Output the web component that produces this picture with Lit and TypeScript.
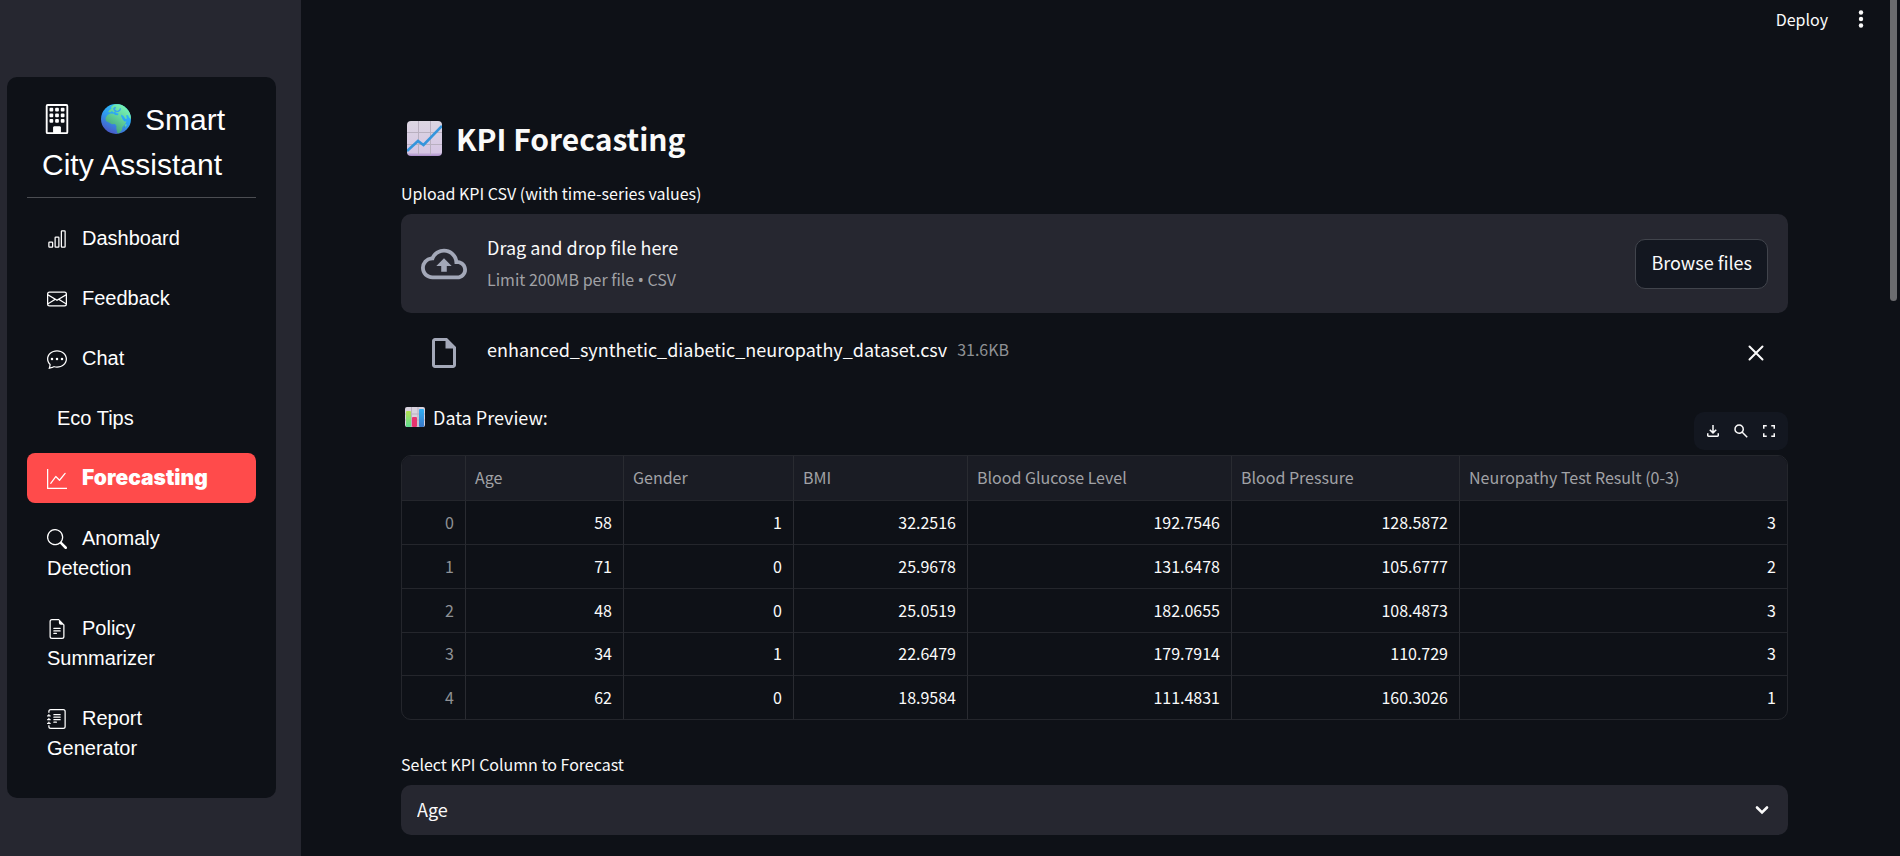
import { LitElement, html, css, svg, nothing } from "lit";
import { customElement, property, state } from "lit/decorators.js";
import { classMap } from "lit/directives/class-map.js";

const navIcons: Record<string, string[]> = {
  building: [
    "M4 2.5a.5.5 0 0 1 .5-.5h1a.5.5 0 0 1 .5.5v1a.5.5 0 0 1-.5.5h-1a.5.5 0 0 1-.5-.5zm3 0a.5.5 0 0 1 .5-.5h1a.5.5 0 0 1 .5.5v1a.5.5 0 0 1-.5.5h-1a.5.5 0 0 1-.5-.5zm3 0a.5.5 0 0 1 .5-.5h1a.5.5 0 0 1 .5.5v1a.5.5 0 0 1-.5.5h-1a.5.5 0 0 1-.5-.5zm-6 3a.5.5 0 0 1 .5-.5h1a.5.5 0 0 1 .5.5v1a.5.5 0 0 1-.5.5h-1a.5.5 0 0 1-.5-.5zm3 0a.5.5 0 0 1 .5-.5h1a.5.5 0 0 1 .5.5v1a.5.5 0 0 1-.5.5h-1a.5.5 0 0 1-.5-.5zm3 0a.5.5 0 0 1 .5-.5h1a.5.5 0 0 1 .5.5v1a.5.5 0 0 1-.5.5h-1a.5.5 0 0 1-.5-.5zm-6 3a.5.5 0 0 1 .5-.5h1a.5.5 0 0 1 .5.5v1a.5.5 0 0 1-.5.5h-1a.5.5 0 0 1-.5-.5zm3 0a.5.5 0 0 1 .5-.5h1a.5.5 0 0 1 .5.5v1a.5.5 0 0 1-.5.5h-1a.5.5 0 0 1-.5-.5zm3 0a.5.5 0 0 1 .5-.5h1a.5.5 0 0 1 .5.5v1a.5.5 0 0 1-.5.5h-1a.5.5 0 0 1-.5-.5z",
    "M3 0a1 1 0 0 0-1 1v14a1 1 0 0 0 1 1h10a1 1 0 0 0 1-1V1a1 1 0 0 0-1-1zm0 1h10v14h-3v-2.500a.5.5 0 0 0-.5-.5h-3a.5.5 0 0 0-.5.5V15H3z",
    "M6 15v-2.500a.5.5 0 0 1 .5-.5h3a.5.5 0 0 1 .5.5V15z",
  ],
  bars: [
    "M4 11H2v3h2zm5-4H7v7h2zm5-5v12h-2V2zm-2-1a1 1 0 0 0-1 1v12a1 1 0 0 0 1 1h2a1 1 0 0 0 1-1V2a1 1 0 0 0-1-1zM6 7a1 1 0 0 1 1-1h2a1 1 0 0 1 1 1v7a1 1 0 0 1-1 1H7a1 1 0 0 1-1-1zm-5 4a1 1 0 0 1 1-1h2a1 1 0 0 1 1 1v3a1 1 0 0 1-1 1H2a1 1 0 0 1-1-1z",
  ],
  envelope: [
    "M0 4a2 2 0 0 1 2-2h12a2 2 0 0 1 2 2v8a2 2 0 0 1-2 2H2a2 2 0 0 1-2-2zm2-1a1 1 0 0 0-1 1v.217l7 4.2 7-4.2V4a1 1 0 0 0-1-1zm13 2.383-4.708 2.825L15 11.105zm-.034 6.876-5.64-3.471L8 9.583l-1.326-.795-5.64 3.47A1 1 0 0 0 2 13h12a1 1 0 0 0 .966-.741M1 11.105l4.708-2.897L1 5.383z",
  ],
  chat: [
    "M5 8a1 1 0 1 1-2 0 1 1 0 0 1 2 0m4 0a1 1 0 1 1-2 0 1 1 0 0 1 2 0m3 1a1 1 0 1 0 0-2 1 1 0 0 0 0 2",
    "m2.165 15.803.02-.004c1.83-.363 2.948-.842 3.468-1.105A9 9 0 0 0 8 15c4.418 0 8-3.134 8-7s-3.582-7-8-7-8 3.134-8 7c0 1.76.743 3.37 1.97 4.6a10.4 10.4 0 0 1-.524 2.318l-.003.011a11 11 0 0 1-.244.637c-.079.186.074.394.273.362a22 22 0 0 0 .693-.125m.8-3.108a1 1 0 0 0-.287-.801C1.618 10.83 1 9.468 1 8c0-3.192 3.004-6 7-6s7 2.808 7 6-3.004 6-7 6a8 8 0 0 1-2.088-.272 1 1 0 0 0-.711.074c-.387.196-1.24.57-2.634.893a11 11 0 0 0 .398-2",
  ],
  graph: [
    "M0 0h1v15h15v1H0zm14.817 3.113a.5.5 0 0 1 .07.704l-4.5 5.5a.5.5 0 0 1-.74.037L7.06 6.767l-3.656 5.027a.5.5 0 0 1-.808-.588l4-5.5a.5.5 0 0 1 .758-.06l2.609 2.61 4.15-5.073a.5.5 0 0 1 .704-.07",
  ],
  search: [
    "M11.742 10.344a6.5 6.5 0 1 0-1.397 1.398h-.001q.044.06.098.115l3.85 3.85a1 1 0 0 0 1.415-1.414l-3.85-3.85a1 1 0 0 0-.115-.1zM12 6.5a5.5 5.5 0 1 1-11 0 5.5 5.5 0 0 1 11 0",
  ],
  file: [
    "M5.5 7a.5.5 0 0 0 0 1h5a.5.5 0 0 0 0-1zM5 9.500a.5.5 0 0 1 .5-.5h5a.5.5 0 0 1 0 1h-5a.5.5 0 0 1-.5-.5m0 2a.5.5 0 0 1 .5-.5h2a.5.5 0 0 1 0 1h-2a.5.5 0 0 1-.5-.5",
    "M9.500 0H4a2 2 0 0 0-2 2v12a2 2 0 0 0 2 2h8a2 2 0 0 0 2-2V4.500zm0 1v2A1.500 1.500 0 0 0 11 4.500h2V14a1 1 0 0 1-1 1H4a1 1 0 0 1-1-1V2a1 1 0 0 1 1-1z",
  ],
  journal: [
    "M5 10.500a.5.5 0 0 1 .5-.5h2a.5.5 0 0 1 0 1h-2a.5.5 0 0 1-.5-.5m0-2a.5.5 0 0 1 .5-.5h5a.5.5 0 0 1 0 1h-5a.5.5 0 0 1-.5-.5m0-2a.5.5 0 0 1 .5-.5h5a.5.5 0 0 1 0 1h-5a.5.5 0 0 1-.5-.5m0-2a.5.5 0 0 1 .5-.5h5a.5.5 0 0 1 0 1h-5a.5.5 0 0 1-.5-.5",
    "M3 0h10a2 2 0 0 1 2 2v12a2 2 0 0 1-2 2H3a2 2 0 0 1-2-2v-1h1v1a1 1 0 0 0 1 1h10a1 1 0 0 0 1-1V2a1 1 0 0 0-1-1H3a1 1 0 0 0-1 1v1H1V2a2 2 0 0 1 2-2",
    "M1 5v-.5a.5.5 0 0 1 1 0V5h.5a.5.5 0 0 1 0 1h-2a.5.5 0 0 1 0-1zm0 3v-.5a.5.5 0 0 1 1 0V8h.5a.5.5 0 0 1 0 1h-2a.5.5 0 0 1 0-1zm0 3v-.5a.5.5 0 0 1 1 0v.5h.5a.5.5 0 0 1 0 1h-2a.5.5 0 0 1 0-1z",
  ],
};

const navIcon = (name: string) => html`<svg class="icon" viewBox="0 0 16 16" aria-hidden="true">
  ${navIcons[name].map((d) => svg`<path d=${d}></path>`)}
</svg>`;

interface NavItem {
  label: string;
  icon?: string;
}

const navItems: NavItem[] = [
  { label: "Dashboard", icon: "bars" },
  { label: "Feedback", icon: "envelope" },
  { label: "Chat", icon: "chat" },
  { label: "Eco Tips" },
  { label: "Forecasting", icon: "graph" },
  { label: "Anomaly Detection", icon: "search" },
  { label: "Policy Summarizer", icon: "file" },
  { label: "Report Generator", icon: "journal" },
];

@customElement("side-menu")
export class SideMenu extends LitElement {
  @state() private current = "Forecasting";

  static styles = css`
    :host {
      display: block;
      flex: 0 0 301px;
      box-sizing: border-box;
      padding: 77px 25px 20px 7px;
      background: #262730;
      font-family: "Liberation Sans", Arial, sans-serif;
      color: #fff;
    }
    .card {
      padding: 20px;
      border-radius: 10px;
      background: #0e1117;
    }
    .title {
      margin: 0;
      padding: 0 15px 10px;
      border-bottom: 1px solid #4b4d52;
      font-size: 30px;
      font-weight: 400;
      line-height: 45px;
    }
    .title .icon {
      width: 30px;
      height: 30px;
      margin-right: 29px;
      vertical-align: -4px;
    }
    .globe {
      width: 30px;
      height: 30px;
      margin-right: 14px;
      vertical-align: -4px;
    }
    .list {
      margin: 10px 0 0;
      padding: 0;
      list-style: none;
    }
    .item {
      padding: 5px 0;
    }
    .link {
      display: block;
      padding: 10px 20px;
      border-radius: 8px;
      color: inherit;
      font-size: 20px;
      line-height: 30px;
      text-decoration: none;
    }
    .link .icon {
      width: 20px;
      height: 20px;
      margin-right: 15px;
      vertical-align: -4px;
    }
    .plain {
      padding-left: 30px;
    }
    .current {
      background: #ff4b4b;
      font-family: Inter, "Liberation Sans", sans-serif;
      font-size: 21px;
      font-weight: 900;
    }
    .icon {
      fill: currentColor;
    }
  `;

  render() {
    return html`
      <nav class="card" aria-label="Main">
        <h2 class="title">${navIcon("building")}<svg class="globe" viewBox="0 0 30 30" aria-hidden="true">
            <defs>
              <linearGradient id="sea" x1="0.8" y1="0.1" x2="0.3" y2="1">
                <stop offset="0" stop-color="#2cc3ff"></stop>
                <stop offset="0.5" stop-color="#2f9bee"></stop>
                <stop offset="1" stop-color="#4a55c4"></stop>
              </linearGradient>
              <linearGradient id="land" x1="0.9" y1="0" x2="0.3" y2="1">
                <stop offset="0" stop-color="#7dffc0"></stop>
                <stop offset="0.5" stop-color="#62d39a"></stop>
                <stop offset="1" stop-color="#3f9a78"></stop>
              </linearGradient>
              <clipPath id="disc"><circle cx="15" cy="15" r="15"></circle></clipPath>
            </defs>
            <g clip-path="url(#disc)">
              <rect width="30" height="30" fill="url(#sea)"></rect>
              <path fill="url(#land)" d="M7 8l1.500-2 2-1.200L10 3l3-2.500L18 0h6l6 8v7l-2-1.500-1-2.500-2 .5 1 3-1.500.5-2-3-2-1.500-.5 1.500 2 4 1.500 1.500h2l-2 3.500-2 2-.5 3-2 2.500-1.500 1-1.200-.5-1-4.500.2-2.500-1.500-2-3 .3L5 17l-.5-3 2-3 3-1.500 3.500.3 1 1.200 3 .2.500-1.700-2.500-.5-1-1.500-1.500 1-1.500-1.500-2 1.500z"></path>
              <path fill="#38a5ee" d="M12 4.500l2-2 1 1-1 2 2 1.500 2-1 1-2 1 .5-.5 2-2 1.500-3 .2-1.500-1.500z"></path>
              <path fill="url(#land)" d="M23.500 22l1.500-2 .5 1-1 2.500-1 .5z"></path>
            </g>
          </svg>Smart City Assistant</h2>
        <ul class="list">
          ${navItems.map(
            (item) => html`<li class="item">
              <a
                class=${classMap({ link: true, plain: !item.icon, current: item.label === this.current })}
                href="#"
                aria-current=${item.label === this.current ? "page" : nothing}
                @click=${(e: Event) => {
                  e.preventDefault();
                  this.current = item.label;
                }}
                >${item.icon ? navIcon(item.icon) : nothing}${item.label}</a
              >
            </li>`
          )}
        </ul>
      </nav>
    `;
  }
}

const columns = ["Age", "Gender", "BMI", "Blood Glucose Level", "Blood Pressure", "Neuropathy Test Result (0-3)"];

const rows: string[][] = [
  ["58", "1", "32.2516", "192.7546", "128.5872", "3"],
  ["71", "0", "25.9678", "131.6478", "105.6777", "2"],
  ["48", "0", "25.0519", "182.0655", "108.4873", "3"],
  ["34", "1", "22.6479", "179.7914", "110.729", "3"],
  ["62", "0", "18.9584", "111.4831", "160.3026", "1"],
];

@customElement("data-grid")
export class DataGrid extends LitElement {
  @property({ attribute: false }) columns: string[] = [];
  @property({ attribute: false }) rows: string[][] = [];

  static styles = css`
    :host {
      display: block;
      overflow: hidden;
      border: 1px solid #24262c;
      border-radius: 10px;
    }
    .grid {
      width: 100%;
      table-layout: fixed;
      border-collapse: separate;
      border-spacing: 0;
      font-size: 16px;
      line-height: 24px;
    }
    .index { width: 64px; }
    .c0 { width: 158px; }
    .c1 { width: 170px; }
    .c2 { width: 174px; }
    .c3 { width: 264px; }
    .c4 { width: 228px; }
    th,
    td {
      box-sizing: border-box;
      height: 44px;
      padding: 0 11px 2px 9px;
      border-right: 1px solid #292b31;
      border-bottom: 1px solid #24262c;
      font-weight: 400;
      text-align: right;
      white-space: nowrap;
    }
    thead th {
      height: 45px;
      background: #1a1c24;
      color: #a1a2a6;
      text-align: left;
    }
    tbody th {
      color: #8f9195;
    }
    tr > :last-child {
      border-right: 0;
    }
    tbody tr:nth-child(n + 4) > * {
      height: 43px;
    }
    tbody tr:last-child > * {
      border-bottom: 0;
    }
  `;

  render() {
    return html`
      <table class="grid">
        <colgroup>
          <col class="index" />
          ${this.columns.map((_, i) => html`<col class=${`c${i}`} />`)}
        </colgroup>
        <thead>
          <tr>
            <th></th>
            ${this.columns.map((c) => html`<th scope="col">${c}</th>`)}
          </tr>
        </thead>
        <tbody>
          ${this.rows.map(
            (r, i) => html`<tr>
              <th scope="row">${i}</th>
              ${r.map((v) => html`<td>${v}</td>`)}
            </tr>`
          )}
        </tbody>
      </table>
    `;
  }
}

const symbol = (d: string) =>
  html`<svg class="symbol" viewBox="0 -960 960 960" aria-hidden="true"><path d=${d}></path></svg>`;

@customElement("app-root")
export class AppRoot extends LitElement {
  static styles = css`
    :host {
      display: flex;
      height: 100vh;
      overflow: hidden;
      background: #0e1117;
      color: #fafafa;
      font-family: "Noto Sans CJK SC", "Noto Sans", sans-serif;
      font-size: 18px;
      line-height: 30px;
    }
    button {
      padding: 0;
      border: 0;
      background: none;
      color: inherit;
      font: inherit;
      cursor: pointer;
    }
    svg {
      display: block;
      fill: currentColor;
    }
    .main {
      flex: 1;
      min-width: 0;
    }
    .topbar {
      display: flex;
      justify-content: flex-end;
      align-items: center;
      gap: 23px;
      height: 38px;
      padding-right: 17px;
    }
    .deploy {
      font-size: 16px;
    }
    .content {
      padding: 79px 100px 20px;
    }
    .heading {
      display: flex;
      align-items: center;
      gap: 14px;
      margin: 0 0 20px;
      padding-left: 6px;
      font-size: 30px;
      font-weight: 700;
      line-height: 42px;
    }
    .label {
      display: block;
      margin-bottom: 7px;
      font-size: 16px;
      line-height: 28px;
    }
    .dropzone {
      display: flex;
      align-items: center;
      gap: 20px;
      padding: 20px;
      border-radius: 10px;
      background: #262730;
    }
    .lead {
      display: flex;
      flex: 0 0 46px;
      justify-content: center;
      color: #a3a8b8;
    }
    .hint {
      flex: 1;
      display: grid;
      gap: 5px;
      line-height: 27px;
    }
    .muted {
      color: #a0a1a5;
      font-size: 16px;
    }
    .dot {
      font-family: "Noto Sans", sans-serif;
      line-height: 1;
    }
    .browse {
      height: 50px;
      padding: 0 15px 4px;
      border: 1px solid #41444c;
      border-radius: 10px;
      background: #131720;
    }
    .picker {
      display: none;
    }
    .file {
      display: flex;
      align-items: center;
      gap: 20px;
      height: 40px;
      margin-top: 20px;
      padding: 0 20px;
    }
    .name {
      display: flex;
      flex: 1;
      gap: 10px;
      padding-bottom: 8px;
    }
    .size {
      color: #8f9195;
      font-size: 16px;
    }
    .remove {
      padding: 2px;
    }
    .preview {
      display: flex;
      justify-content: space-between;
      height: 47px;
      margin: 30px 0 5px;
    }
    .caption {
      display: flex;
      align-items: center;
      gap: 8px;
      height: 28px;
      margin: 0;
      padding-left: 4px;
    }
    .tools {
      display: flex;
      align-self: flex-end;
      height: 38px;
      padding: 0 5px;
      border-radius: 10px;
      background: #131720;
    }
    .tool {
      display: grid;
      place-items: center;
      width: 28px;
    }
    .symbol {
      width: 18px;
      height: 18px;
    }
    .choose {
      margin-top: 30px;
    }
    .combo {
      display: grid;
      align-items: center;
    }
    .select {
      grid-area: 1 / 1;
      width: 100%;
      height: 50px;
      padding: 0 16px 2px;
      border: 0;
      border-radius: 10px;
      appearance: none;
      background: #262730;
      color: inherit;
      font: inherit;
    }
    .chevron {
      grid-area: 1 / 1;
      justify-self: end;
      margin-right: 18px;
      fill: none;
      pointer-events: none;
    }
    .scroll {
      flex: 0 0 12px;
      display: flex;
      justify-content: center;
      padding-right: 1px;
      box-sizing: border-box;
    }
    .thumb {
      width: 7px;
      height: 301px;
      border-radius: 0 0 4px 4px;
      background: #6b6c6f;
    }
  `;

  render() {
    return html`
      <side-menu></side-menu>
      <main class="main">
        <header class="topbar">
          <button class="deploy">Deploy</button>
          <button aria-label="Menu">
            <svg width="20" height="20" viewBox="0 0 20 20">
              <circle cx="10" cy="3.500" r="2.200"></circle>
              <circle cx="10" cy="10" r="2.200"></circle>
              <circle cx="10" cy="16.500" r="2.200"></circle>
            </svg>
          </button>
        </header>
        <div class="content">
          <h1 class="heading">
            <svg width="35" height="35" viewBox="0 0 35 35" aria-hidden="true">
              <defs>
                <linearGradient id="paper" x1="0" y1="0" x2="0" y2="1">
                  <stop offset="0" stop-color="#dcd6e2"></stop>
                  <stop offset="0.900" stop-color="#d6c6e4"></stop>
                  <stop offset="1" stop-color="#a98cc8"></stop>
                </linearGradient>
              </defs>
              <rect width="35" height="35" rx="4" fill="url(#paper)"></rect>
              <path d="M11.500 0v34M23.500 0v34M0 11.500h35M0 23.500h35" stroke="#b9b0c0" fill="none"></path>
              <path d="M0 30L11 20L16.500 24L35 5" stroke="#3595dc" stroke-width="2.600" fill="none"></path>
            </svg>
            KPI Forecasting
          </h1>
          <label class="label" for="csv">Upload KPI CSV (with time-series values)</label>
          <section class="dropzone">
            <span class="lead">
              <svg width="46" height="46" viewBox="0 0 24 24" aria-hidden="true">
                <path d="M19.350 10.040A7.490 7.490 0 0 0 12 4C9.110 4 6.600 5.640 5.350 8.040A5.994 5.994 0 0 0 0 14c0 3.310 2.690 6 6 6h13c2.760 0 5-2.240 5-5 0-2.640-2.050-4.780-4.650-4.960zM19 18H6c-2.210 0-4-1.790-4-4s1.790-4 4-4h.710C7.370 7.690 9.480 6 12 6c3.040 0 5.500 2.460 5.500 5.500v.5H19c1.660 0 3 1.340 3 3s-1.340 3-3 3zM8 13h2.550v3h2.900v-3H16l-4-4-4 4z"></path>
              </svg>
            </span>
            <div class="hint">
              <span>Drag and drop file here</span>
              <span class="muted">Limit 200MB per file <span class="dot">•</span> CSV</span>
            </div>
            <input class="picker" id="csv" type="file" accept=".csv" />
            <button class="browse" @click=${this.browse}>Browse files</button>
          </section>
          <div class="file">
            <span class="lead">
              <svg width="36" height="36" viewBox="0 0 24 24" aria-hidden="true">
                <path d="M14 2H6c-1.100 0-1.990.9-1.990 2L4 20c0 1.100.890 2 1.990 2H18c1.100 0 2-.9 2-2V8l-6-6zM6 20V4h7v5h5v11H6z"></path>
              </svg>
            </span>
            <div class="name">
              <span>enhanced_synthetic_diabetic_neuropathy_dataset.csv</span>
              <span class="size">31.6KB</span>
            </div>
            <button class="remove" aria-label="Remove file">
              <svg width="20" height="20" viewBox="0 0 20 20">
                <path d="M3.500 3.500l13 13M16.500 3.500l-13 13" stroke="currentColor" stroke-width="2" stroke-linecap="round"></path>
              </svg>
            </button>
          </div>
          <div class="preview">
            <p class="caption">
              <svg width="20" height="20" viewBox="0 0 20 20" aria-hidden="true">
                <defs>
                  <linearGradient id="lime" x1="0" y1="0" x2="0" y2="1">
                    <stop offset="0" stop-color="#b2e04f"></stop>
                    <stop offset="1" stop-color="#5ddc92"></stop>
                  </linearGradient>
                  <linearGradient id="azure" x1="0" y1="0" x2="0" y2="1">
                    <stop offset="0" stop-color="#2fb0f5"></stop>
                    <stop offset="1" stop-color="#3a78c8"></stop>
                  </linearGradient>
                </defs>
                <rect width="20" height="20" rx="2" fill="#d8d2de"></rect>
                <path d="M6.500 0v20M13 0v20M0 7h20M0 13h20" stroke="#b9b0c0" fill="none"></path>
                <rect x="1" y="4" width="5" height="16" rx="1" fill="url(#lime)"></rect>
                <rect x="7" y="10" width="5" height="10" rx="1" fill="#e8336f"></rect>
                <rect x="14" y="2" width="5" height="18" rx="1" fill="url(#azure)"></rect>
              </svg>
              Data Preview:
            </p>
            <div class="tools" role="toolbar" aria-label="Table tools">
              <button class="tool" aria-label="Download">
                ${symbol("M480-320 280-520l56-58 104 104v-326h80v326l104-104 56 58-200 200ZM240-160q-33 0-56.500-23.500T160-240v-120h80v120h480v-120h80v120q0 33-23.500 56.500T720-160H240Z")}
              </button>
              <button class="tool" aria-label="Search">
                ${symbol("M784-120 532-372q-30 24-69 38t-83 14q-109 0-184.500-75.500T120-580q0-109 75.500-184.500T380-840q109 0 184.500 75.500T640-580q0 44-14 83t-38 69l252 252-56 56ZM380-400q75 0 127.500-52.500T560-580q0-75-52.500-127.500T380-760q-75 0-127.500 52.500T200-580q0 75 52.500 127.500T380-400Z")}
              </button>
              <button class="tool" aria-label="Fullscreen">
                ${symbol("M160-160v-200h80v120h120v80H160Zm440 0v-80h120v-120h80v200H600ZM160-600v-200h200v80H240v120h-80Zm560 0v-120H600v-80h200v200h-80Z")}
              </button>
            </div>
          </div>
          <data-grid .columns=${columns} .rows=${rows}></data-grid>
          <div class="choose">
            <label class="label" for="kpi">Select KPI Column to Forecast</label>
            <div class="combo">
              <select class="select" id="kpi">
                ${columns.map((c) => html`<option>${c}</option>`)}
              </select>
              <svg class="chevron" width="16" height="16" viewBox="0 0 16 16" aria-hidden="true">
                <path d="M3 5.500l5 5 5-5" stroke="#fafafa" stroke-width="2.600" stroke-linecap="round"></path>
              </svg>
            </div>
          </div>
        </div>
      </main>
      <div class="scroll" aria-hidden="true"><div class="thumb"></div></div>
    `;
  }

  private browse() {
    this.renderRoot.querySelector<HTMLInputElement>("#csv")?.click();
  }
}
